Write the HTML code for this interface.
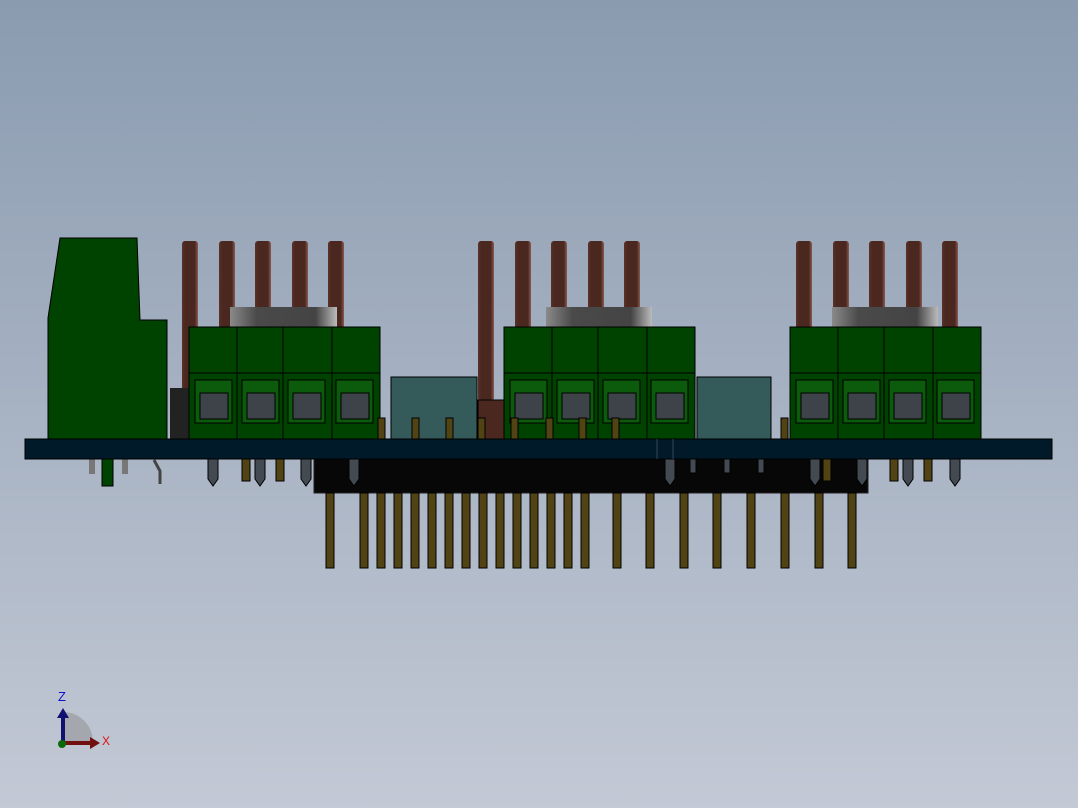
<!DOCTYPE html>
<html><head><style>
html,body{margin:0;padding:0;width:1078px;height:808px;overflow:hidden}
body{background:linear-gradient(#8a9bb0,#c3c9d5)}
svg{position:absolute;left:0;top:0}
</style></head><body>
<svg width="1078" height="808" viewBox="0 0 1078 808" xmlns="http://www.w3.org/2000/svg">
<defs>
<linearGradient id="rod" x1="0" x2="1"><stop offset="0" stop-color="#5a3228"/><stop offset=".2" stop-color="#4a2820"/><stop offset=".8" stop-color="#4a2820"/><stop offset="1" stop-color="#8a5a50"/></linearGradient>
<linearGradient id="sil" x1="0" x2="1"><stop offset="0" stop-color="#8a8a8a"/><stop offset=".25" stop-color="#4a4a4a"/><stop offset=".8" stop-color="#444"/><stop offset="1" stop-color="#bbb"/></linearGradient>
<g id="rods">
<rect x="0" y="241" width="16" height="160" fill="url(#rod)" rx="3"/>
<rect x="37" y="241" width="16" height="160" fill="url(#rod)" rx="3"/>
<rect x="73" y="241" width="16" height="160" fill="url(#rod)" rx="3"/>
<rect x="110" y="241" width="16" height="160" fill="url(#rod)" rx="3"/>
<rect x="146" y="241" width="16" height="160" fill="url(#rod)" rx="3"/>
</g>
<g id="tb" stroke="#000" stroke-width="1">
<rect x="0" y="327" width="191" height="112" fill="#004200"/>
<line x1="0" y1="373" x2="191" y2="373"/>
<line x1="48" y1="327" x2="48" y2="439"/><line x1="94" y1="327" x2="94" y2="439"/><line x1="143" y1="327" x2="143" y2="439"/>
<g id="win"><rect x="6" y="380" width="37" height="43" fill="#0c5a0c"/><rect x="11" y="393" width="28" height="26" fill="#3e434a"/></g>
<use href="#win" x="47"/><use href="#win" x="93"/><use href="#win" x="141"/>
</g>
</defs>
<use href="#rods" x="182"/>
<use href="#rods" x="478"/>
<use href="#rods" x="796"/>
<rect x="230" y="307" width="107" height="20" fill="url(#sil)"/>
<rect x="546" y="307" width="106" height="20" fill="url(#sil)"/>
<rect x="832" y="307" width="106" height="20" fill="url(#sil)"/>
<rect x="170" y="388" width="20" height="51" fill="#222"/>
<rect x="478" y="400" width="26" height="39" fill="#4a2820" stroke="#000"/>
<use href="#tb" x="189"/>
<use href="#tb" x="504"/>
<use href="#tb" x="790"/>
<rect x="391" y="377" width="86" height="62" fill="#355a5a" stroke="#000"/>
<rect x="697" y="377" width="74" height="62" fill="#355a5a" stroke="#000"/>
<polygon points="48,318 60,238 137,238 140,320 167,320 167,440 48,440" fill="#004200" stroke="#000"/>
<g fill="#524314" stroke="#000" stroke-width="1">
<rect x="378" y="418" width="7" height="22"/><rect x="412" y="418" width="7" height="22"/><rect x="446" y="418" width="7" height="22"/>
<rect x="478" y="418" width="7" height="22"/><rect x="511" y="418" width="7" height="22"/><rect x="546" y="418" width="7" height="22"/>
<rect x="579" y="418" width="7" height="22"/><rect x="612" y="418" width="7" height="22"/><rect x="781" y="418" width="7" height="22"/>
</g>
<rect x="314" y="459" width="554" height="34" fill="#070707" stroke="#222"/>
<g fill="#524314" stroke="#000" stroke-width="1">
<rect x="326" y="493" width="8" height="75"/><rect x="360" y="493" width="8" height="75"/><rect x="377" y="493" width="8" height="75"/><rect x="394" y="493" width="8" height="75"/><rect x="411" y="493" width="8" height="75"/><rect x="428" y="493" width="8" height="75"/><rect x="445" y="493" width="8" height="75"/><rect x="462" y="493" width="8" height="75"/><rect x="479" y="493" width="8" height="75"/><rect x="496" y="493" width="8" height="75"/><rect x="513" y="493" width="8" height="75"/><rect x="530" y="493" width="8" height="75"/><rect x="547" y="493" width="8" height="75"/><rect x="564" y="493" width="8" height="75"/><rect x="581" y="493" width="8" height="75"/><rect x="613" y="493" width="8" height="75"/><rect x="646" y="493" width="8" height="75"/><rect x="680" y="493" width="8" height="75"/><rect x="713" y="493" width="8" height="75"/><rect x="747" y="493" width="8" height="75"/><rect x="781" y="493" width="8" height="75"/><rect x="815" y="493" width="8" height="75"/><rect x="848" y="493" width="8" height="75"/>
<rect x="242" y="459" width="8" height="22"/><rect x="276" y="459" width="8" height="22"/><rect x="823" y="459" width="8" height="22"/><rect x="890" y="459" width="8" height="22"/><rect x="924" y="459" width="8" height="22"/>
</g>
<g fill="#434a52" stroke="#000" stroke-width="1">
<path d="M208 459h10v20l-5 7l-5-7z"/><path d="M255 459h10v20l-5 7l-5-7z"/><path d="M301 459h10v20l-5 7l-5-7z"/><path d="M349 459h10v20l-5 7l-5-7z"/><path d="M665 459h10v20l-5 7l-5-7z"/><path d="M810 459h10v20l-5 7l-5-7z"/><path d="M857 459h10v20l-5 7l-5-7z"/><path d="M903 459h10v20l-5 7l-5-7z"/><path d="M950 459h10v20l-5 7l-5-7z"/>
<rect x="690" y="459" width="6" height="14"/><rect x="724" y="459" width="6" height="14"/><rect x="758" y="459" width="6" height="14"/>
</g>
<rect x="89" y="459" width="6" height="15" fill="#777"/><rect x="122" y="459" width="6" height="15" fill="#777"/>
<rect x="102" y="459" width="11" height="27" fill="#004200" stroke="#000"/>
<path d="M154 460l6 11v13" stroke="#444" stroke-width="3" fill="none"/>
<rect x="25" y="439" width="1027" height="20" fill="#001a2a" stroke="#000"/>
<line x1="657" y1="439" x2="657" y2="459" stroke="#345"/><line x1="673" y1="439" x2="673" y2="459" stroke="#345"/>
<path d="M63 742 V712 A30 30 0 0 1 93 742z" fill="#a4a8ae"/>
<path d="M63 742 V716" stroke="#101070" stroke-width="4"/><path d="M57 718 L63 708 L69 718z" fill="#101070"/>
<path d="M63 743 H92" stroke="#701010" stroke-width="4"/><path d="M90 737 L100 743 L90 749z" fill="#701010"/>
<circle cx="62" cy="744" r="4" fill="#0a6a0a"/>
<text x="58" y="701" font-family="Liberation Sans,sans-serif" font-size="13" fill="#1010d0">Z</text>
<text x="102" y="745" font-family="Liberation Sans,sans-serif" font-size="12" fill="#e01010">X</text>
</svg>
</body></html>
